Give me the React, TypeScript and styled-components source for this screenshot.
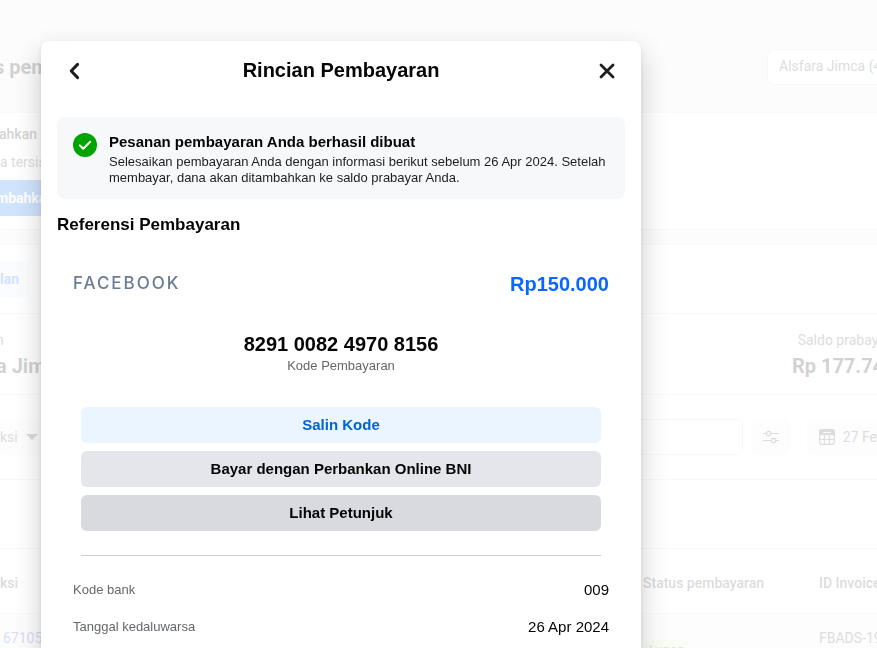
import React from "react";
import styled, { createGlobalStyle, css } from "styled-components";

const GlobalStyle = createGlobalStyle`
  * { box-sizing: border-box; }
  body { margin: 0; background: #fff; overflow: hidden; }
  h1, h2, h3, p, dl, dd, dt { margin: 0; font-weight: normal; }
  button, input { font: inherit; }
`;

/* ---------- page behind the dialog ---------- */

const Page = styled.main`
  height: 100vh;
  overflow: hidden;
  background: #f0f0f0;
  font-family: Roboto, sans-serif;
  font-size: 14px;
  line-height: 20px;
  color: #1c1e21;
  white-space: nowrap;
`;

const PageHeader = styled.header`
  display: flex;
  align-items: center;
  justify-content: space-between;
  height: 112px;
  padding-top: 22px;
`;

const PageTitle = styled.h1`
  margin-left: -6px;
  font-size: 20px;
  font-weight: 700;
`;

const AccountButton = styled.button`
  width: 110px;
  height: 36px;
  padding: 0 0 2px 11px;
  border: 1px solid #d8d8d8;
  border-right: 0;
  border-radius: 6px 0 0 6px;
  background: #fff;
  color: #4b4f56;
  text-align: left;
`;

const Panel = styled.section`
  background: #fff;
  border-top: 1px solid #e0e0e0;
  border-bottom: 1px solid #e0e0e0;
`;

const FundsPanel = styled(Panel)`
  display: flex;
  flex-direction: column;
  align-items: flex-start;
  gap: 8px;
  padding: 11px 0 13px;
  margin-bottom: 14px;
`;

const Strong = styled.span`
  margin-left: -1px;
  font-weight: 500;
`;

const Muted = styled.span`
  color: #4b4f56;
`;

const FundsButton = styled.button`
  height: 36px;
  padding: 0 16px 0 0;
  margin-left: -4px;
  border: 0;
  background: #1877f2;
  color: #fff;
  font-weight: 700;
`;

const Band = styled.div<{ $height: number }>`
  display: flex;
  align-items: center;
  justify-content: space-between;
  height: ${(p) => p.$height}px;
  border-bottom: 1px solid #dcdcdc;
`;

const TabButton = styled.button`
  height: 36px;
  padding: 0 12px 0 0;
  border: 0;
  border-radius: 0 6px 6px 0;
  background: #ebf1ff;
  color: #1a66ff;
  font-weight: 700;
`;

const Figure = styled.div<{ $end?: boolean }>`
  display: flex;
  flex-direction: column;
  align-items: ${(p) => (p.$end ? "center" : "flex-start")};
  gap: 4px;
  width: ${(p) => (p.$end ? "78px" : "auto")};
  margin-left: ${(p) => (p.$end ? "0" : "-4px")};
`;

const Amount = styled.span`
  font-size: 20px;
  line-height: 24px;
  font-weight: 700;
`;

const Filters = styled.div`
  display: flex;
  align-items: center;
`;

const filterBase = css`
  display: flex;
  align-items: center;
  height: 36px;
  border: 0;
  border-radius: 6px;
  background: #f2f2f2;
  color: #4b4f56;
`;

const TypeButton = styled.button`
  ${filterBase}
  gap: 8px;
  padding: 0 8px 0 0;
`;

const SearchInput = styled.input`
  width: 160px;
  height: 36px;
  margin-right: 8px;
  border: 1px solid #d8d8d8;
  border-radius: 6px;
  background: #fff;
`;

const TuneButton = styled.button`
  ${filterBase}
  justify-content: center;
  width: 40px;
  padding: 0;
  margin-right: 16px;
`;

const DateButton = styled.button`
  ${filterBase}
  gap: 8px;
  width: 70px;
  padding: 0 0 0 12px;
  border-radius: 6px 0 0 6px;
`;

const Table = styled.table`
  width: 100%;
  table-layout: fixed;
  border-collapse: collapse;
  text-align: left;

  th, td { padding: 0; }
  th { height: 64px; padding-top: 4px; border-bottom: 1px solid #e6e6e6; font-weight: 500; color: #4b4f56; }
  td { height: 76px; padding-top: 14px; vertical-align: top; background: #f6f6f6; color: #4b4f56; }
  th:last-child, td:last-child { width: 58px; }
  th:nth-child(2), td:nth-child(2) { width: 176px; }
`;

const IdLink = styled.a`
  padding-left: 3px;
  color: #3355dd;
  text-decoration: none;
`;

const Badge = styled.span`
  display: inline-block;
  margin-top: 12px;
  padding: 0 6px;
  border-radius: 10px;
  background: #dff5c8;
  color: #4a7a2a;
  font-size: 13px;
  line-height: 20px;
`;

/* ---------- dialog ---------- */

const Scrim = styled.div`
  position: fixed;
  inset: 0;
  padding: 41px 41px 0;
  overflow: hidden;
  background: rgba(255, 255, 255, 0.8);
`;

const Dialog = styled.div`
  max-width: 600px;
  min-height: 100vh;
  padding: 0 16px;
  border-radius: 8px;
  background: #fff;
  box-shadow: 0 12px 28px rgba(0, 0, 0, 0.2), 0 2px 4px rgba(0, 0, 0, 0.1);
  font-family: "Liberation Sans", Arial, sans-serif;
  color: #050505;
`;

const DialogHeader = styled.header`
  display: flex;
  align-items: center;
  justify-content: space-between;
  height: 60px;
  margin-bottom: 16px;
`;

const DialogTitle = styled.h2`
  padding-bottom: 2px;
  font-size: 20px;
  line-height: 24px;
  font-weight: 700;
`;

const IconButton = styled.button`
  display: flex;
  align-items: center;
  justify-content: center;
  width: 36px;
  height: 36px;
  padding: 0;
  border: 0;
  background: transparent;
  color: #1c1e21;
`;

const Notice = styled.section`
  display: flex;
  gap: 12px;
  padding: 16px 16px 13px;
  border-radius: 8px;
  background: #f7f8fa;

  svg { flex: none; }
`;

const NoticeTitle = styled.h3`
  margin-bottom: 3px;
  font-size: 15px;
  line-height: 18px;
  font-weight: 700;
`;

const NoticeText = styled.p`
  font-size: 13px;
  line-height: 16px;
  color: #1c1e21;
`;

const SectionTitle = styled.h3`
  margin: 16px 0 32px;
  font-size: 17px;
  line-height: 20px;
  font-weight: 700;
`;

const Summary = styled.div`
  display: flex;
  align-items: center;
  justify-content: space-between;
  padding: 0 16px;
  margin-bottom: 31px;
  line-height: 32px;
`;

const Wordmark = styled.span`
  padding-bottom: 2px;
  font-family: Inter, sans-serif;
  font-size: 17px;
  font-weight: 500;
  letter-spacing: 2px;
  color: #6b7c93;
`;

const Total = styled.strong`
  font-size: 20px;
  color: #0a66ff;
`;

const Code = styled.p`
  font-size: 20px;
  line-height: 24px;
  font-weight: 700;
  text-align: center;
`;

const CodeLabel = styled.p`
  margin-bottom: 31px;
  font-size: 13px;
  line-height: 20px;
  color: #65676b;
  text-align: center;
`;

const Actions = styled.div`
  display: flex;
  flex-direction: column;
  gap: 8px;
  margin: 0 24px;
  padding-bottom: 24px;
  border-bottom: 1px solid #ccced2;
`;

const tones = {
  primary: "background: #ebf5ff; color: #0064d1;",
  neutral: "background: #e4e6eb; color: #050505;",
  pressed: "background: #d8dadf; color: #050505;",
};

const ActionButton = styled.button<{ $tone: keyof typeof tones }>`
  height: 36px;
  padding: 0 12px 2px;
  border: 0;
  border-radius: 6px;
  font-size: 15px;
  font-weight: 700;
  ${(p) => tones[p.$tone]}
`;

const Details = styled.dl`
  display: flex;
  flex-direction: column;
  gap: 17px;
  padding: 24px 16px;
`;

const Detail = styled.div`
  display: flex;
  align-items: center;
  justify-content: space-between;
  line-height: 20px;

  dt { font-size: 13px; color: #65676b; }
  dd { font-size: 15px; }
`;

export default function App() {
  return (
    <>
      <GlobalStyle />
      <Page>
        <PageHeader>
          <PageTitle>s pem</PageTitle>
          <AccountButton>Alsfara Jimca (4</AccountButton>
        </PageHeader>

        <FundsPanel>
          <Strong>ahkan</Strong>
          <Muted>a tersis</Muted>
          <FundsButton>mbahka</FundsButton>
        </FundsPanel>

        <Panel>
          <Band $height={69}>
            <TabButton>lan</TabButton>
          </Band>
          <Band $height={81}>
            <Figure>
              <Muted>n</Muted>
              <Amount>a Jim</Amount>
            </Figure>
            <Figure $end>
              <Muted>Saldo prabay</Muted>
              <Amount>Rp 177.74</Amount>
            </Figure>
          </Band>
          <Band $height={85}>
            <TypeButton>
              ksi
              <svg width="12" height="8" viewBox="0 0 12 8" aria-hidden="true">
                <path d="M1 1h10q.8 0 .3.7L6.8 6.6q-.8.8-1.6 0L.7 1.7Q.2 1 1 1z" fill="currentColor" />
              </svg>
            </TypeButton>
            <Filters>
              <SearchInput type="search" aria-label="Cari" />
              <TuneButton aria-label="Filter">
                <svg width="16" height="14" viewBox="0 0 16 14" fill="none" stroke="currentColor" strokeWidth="1.2" aria-hidden="true">
                  <path d="M0 3.5h3M8 3.5h8M0 10.5h8M13 10.5h3" />
                  <circle cx="5.5" cy="3.5" r="2.2" />
                  <circle cx="10.5" cy="10.5" r="2.2" />
                </svg>
              </TuneButton>
              <DateButton>
                <svg width="16" height="16" viewBox="0 0 16 16" fill="none" stroke="currentColor" aria-hidden="true">
                  <rect x=".6" y=".6" width="14.8" height="14.8" rx="2.4" strokeWidth="1.2" />
                  <path d="M.6 5.6V3Q.6.6 3 .6h10q2.4 0 2.4 2.4v2.6z" fill="currentColor" />
                  <path d="M4.5 3.4h7" stroke="#f2f2f2" strokeLinecap="round" />
                  <path d="M.6 10.5h14.8M5.5 5.5v10M10.5 5.5v10" />
                </svg>
                27 Fe
              </DateButton>
            </Filters>
          </Band>
          <Band $height={69} />
          <Table>
            <thead>
              <tr>
                <th>ksi</th>
                <th>Status pembayaran</th>
                <th>ID Invoice</th>
              </tr>
            </thead>
            <tbody>
              <tr>
                <td><IdLink href="#transaksi">67105</IdLink></td>
                <td><Badge>Lunas</Badge></td>
                <td>FBADS-19</td>
              </tr>
            </tbody>
          </Table>
        </Panel>
      </Page>

      <Scrim>
        <Dialog role="dialog" aria-modal="true" aria-labelledby="dialog-title">
          <DialogHeader>
            <IconButton aria-label="Kembali">
              <svg width="20" height="20" viewBox="0 0 20 20" fill="none" stroke="currentColor" strokeWidth="3" strokeLinecap="round" strokeLinejoin="round" aria-hidden="true">
                <path d="M12.6 3.4 6.2 10l6.4 6.6" />
              </svg>
            </IconButton>
            <DialogTitle id="dialog-title">Rincian Pembayaran</DialogTitle>
            <IconButton aria-label="Tutup">
              <svg width="20" height="20" viewBox="0 0 20 20" fill="none" stroke="currentColor" strokeWidth="2.8" strokeLinecap="round" aria-hidden="true">
                <path d="m4 4 12 12M16 4 4 16" />
              </svg>
            </IconButton>
          </DialogHeader>

          <Notice>
            <svg width="24" height="24" viewBox="0 0 24 24" aria-hidden="true">
              <circle cx="12" cy="12" r="12" fill="#00a400" />
              <path d="m6.8 12.4 3.4 3.4 7-7" fill="none" stroke="#fff" strokeWidth="2" strokeLinecap="round" strokeLinejoin="round" />
            </svg>
            <div>
              <NoticeTitle>Pesanan pembayaran Anda berhasil dibuat</NoticeTitle>
              <NoticeText>
                Selesaikan pembayaran Anda dengan informasi berikut sebelum 26 Apr 2024. Setelah membayar, dana
                akan ditambahkan ke saldo prabayar Anda.
              </NoticeText>
            </div>
          </Notice>

          <SectionTitle>Referensi Pembayaran</SectionTitle>
          <Summary>
            <Wordmark>FACEBOOK</Wordmark>
            <Total>Rp150.000</Total>
          </Summary>
          <Code>8291 0082 4970 8156</Code>
          <CodeLabel>Kode Pembayaran</CodeLabel>
          <Actions>
            <ActionButton $tone="primary">Salin Kode</ActionButton>
            <ActionButton $tone="neutral">Bayar dengan Perbankan Online BNI</ActionButton>
            <ActionButton $tone="pressed">Lihat Petunjuk</ActionButton>
          </Actions>
          <Details>
            <Detail>
              <dt>Kode bank</dt>
              <dd>009</dd>
            </Detail>
            <Detail>
              <dt>Tanggal kedaluwarsa</dt>
              <dd>26 Apr 2024</dd>
            </Detail>
          </Details>
        </Dialog>
      </Scrim>
    </>
  );
}
